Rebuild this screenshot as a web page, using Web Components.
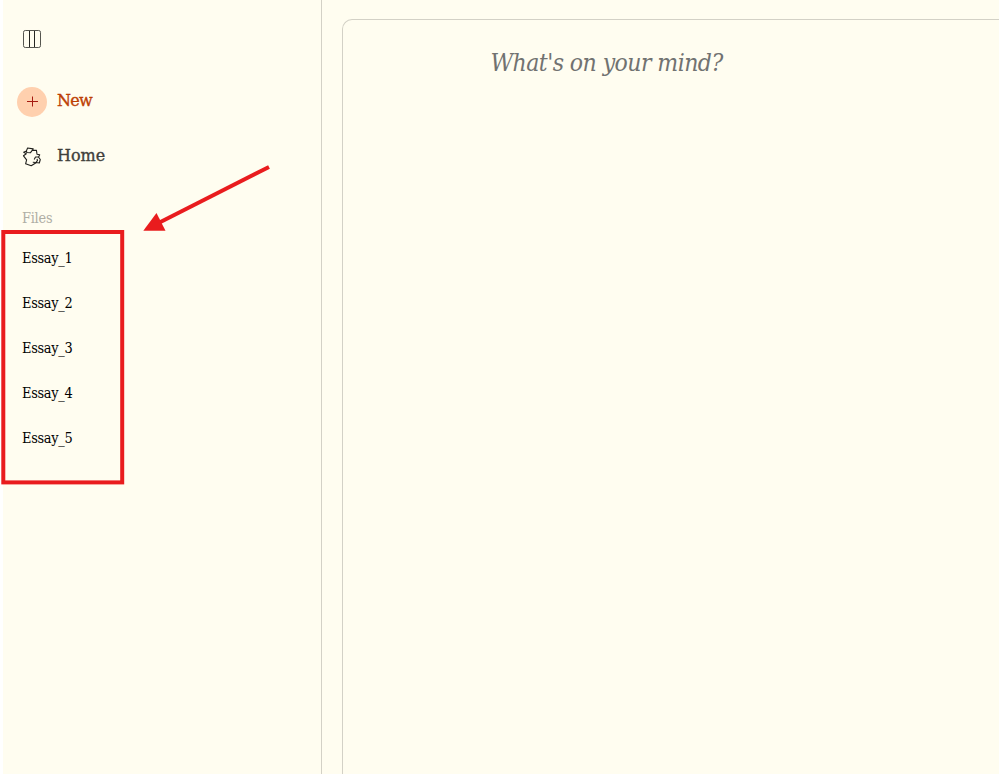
<!DOCTYPE html>
<html lang="en">
<head>
<meta charset="utf-8">
<title>Essays</title>
<style>
html,body{margin:0;height:100%;background:#fff;overflow:hidden}
body{font-family:"DejaVu Serif Condensed","DejaVu Serif",serif;font-stretch:condensed}
</style>
</head>
<body>
<essay-app></essay-app>
<script>
const define = (name, html) => customElements.define(name, class extends HTMLElement {
  constructor() {
    super();
    const t = document.createElement('template');
    t.innerHTML = html;
    this.attachShadow({mode: 'open'}).append(t.content.cloneNode(true));
  }
});

define('nav-item', `
<style>
:host{display:flex;align-items:center;height:30px;gap:10px;font-family:"DejaVu Serif",serif;font-stretch:normal;font-size:16px;line-height:30px;color:#3f403b;-webkit-text-stroke:.35px currentColor}
.icon{width:30px;height:30px;display:flex;flex:none;-webkit-text-stroke:0}
.label{margin-top:-2px;letter-spacing:var(--track,0)}
</style>
<span class="icon"><slot name="icon"></slot></span><span class="label"><slot></slot></span>`);

define('file-item', `
<style>:host{display:block;height:45px;line-height:45px;font-size:14.4px;letter-spacing:-.3px;color:#000}</style>
<slot></slot>`);

define('side-bar', `
<style>
:host{display:block;box-sizing:border-box;width:319px;height:100%;border-right:1px solid #d3d1c6;padding:24px 14px 0}
svg{display:block;width:30px;height:30px}
nav-item{margin-top:33px}
nav-item + nav-item{margin-top:25px}
.new{color:#bd3f05;--track:-.7px}
h2{margin:31px 0 0 5px;height:30px;font-size:14.4px;font-weight:400;line-height:30px;color:#afaea5;letter-spacing:-.25px}
.files{padding:3px 0 0 5px}
</style>
<svg viewBox="0 0 30 30" fill="none"><rect x="6.5" y="6.5" width="17" height="17" rx="1.8" stroke="#55554f"/><path d="M12.5 7v16M17.5 7v16" stroke="#262622"/></svg>
<nav-item class="new"><svg slot="icon" viewBox="0 0 30 30"><circle cx="15" cy="15" r="15" fill="#ffd0ae"/><path d="M10 14.5h11M15.5 9.5v10" stroke="#a51a10" fill="none"/></svg>New</nav-item>
<nav-item style="--track:0px"><svg slot="icon" viewBox="0 0 30 30" fill="none" stroke="#20201d" stroke-width="1.1" stroke-linejoin="round"><path d="M10.6 6 16.2 6.9 15.2 8.4 19.4 8.2 20 12.2 22.7 12.8 21.5 15.2 23.3 17.5 22.3 21 19.5 20.5 14.2 23.8 8.6 21.8 9.6 17.8 6.5 13.8 9.3 11.8 6.7 10.3 9.4 8.9ZM9.4 9 9.8 10.5 13.5 10.7 15.2 8.4M21.5 14.7 18.5 15 17.2 17.6M15.8 20.2 19 20.5 20.5 18.4 20 16.8"/></svg>Home</nav-item>
<h2>Files</h2>
<div class="files"><file-item>Essay_1</file-item><file-item>Essay_2</file-item><file-item>Essay_3</file-item><file-item>Essay_4</file-item><file-item>Essay_5</file-item></div>`);

define('essay-editor', `
<style>
:host{display:block;box-sizing:border-box;flex:1;margin:19px 0 0 20px;border:solid #d3d1c6;border-width:1px 0 0 1px;border-top-left-radius:10px;padding:23px 0 0 147.5px}
.prompt{font-size:24.5px;line-height:40px;font-style:italic;color:#717271;white-space:nowrap;letter-spacing:-.55px}
</style>
<div class="prompt"><slot></slot></div>`);

define('red-marks', `
<style>:host{position:absolute;inset:0;pointer-events:none}svg{display:block}</style>
<svg width="999" height="774"><rect x="3.3" y="232" width="118.9" height="250.4" fill="none" stroke="#e91c1e" stroke-width="4"/><path d="M269 167 158 223.2" stroke="#e91c1e" stroke-width="4"/><path d="M143.3 230.8 156.5 213 165.5 230.8Z" fill="#e91c1e"/></svg>`);

define('essay-app', `
<style>:host{display:flex;position:relative;width:996px;height:774px;margin-left:3px;background:#fffdf0}red-marks{left:-3px}</style>
<side-bar></side-bar><essay-editor>What's on your mind?</essay-editor><red-marks></red-marks>`);
</script>
</body>
</html>
